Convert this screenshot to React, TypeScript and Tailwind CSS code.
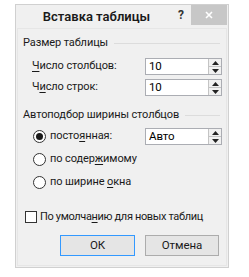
import React from 'react';

const font = { fontFamily: 'Roboto, "Noto Sans", sans-serif' };

function Acc({ children }: { children: React.ReactNode }) {
  return <span className="underline underline-offset-2">{children}</span>;
}

function Spin({ value }: { value: string }) {
  return (
    <div className="flex h-[17px] w-[77px] border border-[#abadb3] bg-white">
      <div className="flex flex-1 items-center pl-[3px] text-[11.5px] leading-none text-black">{value}</div>
      <div className="flex w-[13px] flex-col border-l border-[#c4c4c4] bg-[#f0f0f0]">
        <div className="flex flex-1 items-center justify-center border-b border-[#c4c4c4]">
          <svg width="7" height="4" viewBox="0 0 7 4">
            <path d="M0 4 L3.5 0 L7 4 Z" fill="#222" />
          </svg>
        </div>
        <div className="flex flex-1 items-center justify-center">
          <svg width="7" height="4" viewBox="0 0 7 4">
            <path d="M0 0 L3.5 4 L7 0 Z" fill="#222" />
          </svg>
        </div>
      </div>
    </div>
  );
}

function GroupHeading({ title }: { title: string }) {
  return (
    <div className="flex h-[16px] items-center gap-[6px]">
      <span className="whitespace-nowrap">{title}</span>
      <div className="mr-[2px] h-px flex-1 bg-[#dcdcdc]" />
    </div>
  );
}

function Radio({ checked }: { checked?: boolean }) {
  return (
    <div className="flex h-[13px] w-[13px] shrink-0 items-center justify-center rounded-full border border-[#333] bg-white">
      {checked && <div className="h-[7px] w-[7px] rounded-full bg-[#1a1a1a]" />}
    </div>
  );
}

export default function App() {
  return (
    <div className="min-h-screen bg-white pl-[15px] pt-[4px] text-[11px] tracking-[-0.1px] text-[#1a1a1a]" style={font}>
      <div className="flex h-[264px] w-[214px] flex-col border border-[#d0d0d0] bg-[#f0f0f0]">
        <div className="flex h-[23px] items-start">
          <div className="flex h-[23px] flex-1 items-center justify-center pl-[6px] text-[13px] font-semibold tracking-normal text-[#1a1a1a]">
            Вставка таблицы
          </div>
          <div className="flex h-[20px] w-[20px] items-center justify-center text-[12px] font-bold text-[#333]">?</div>
          <div className="mr-[1px] flex h-[20px] w-[36px] items-center justify-center bg-[#c7c7c7]">
            <svg width="8" height="8" viewBox="0 0 8 8">
              <path d="M1 1 L7 7 M7 1 L1 7" stroke="#fff" strokeWidth="1.6" />
            </svg>
          </div>
        </div>
        <div className="mx-[1px] mb-[1px] flex flex-1 flex-col border border-[#e6e6e6] pl-[5px] pr-[4px] pt-[6px]">
          <GroupHeading title="Размер таблицы" />
          <div className="mt-[7px] flex items-center justify-between pl-[9px]">
            <span><Acc>Ч</Acc>исло столбцов:</span>
            <Spin value="10" />
          </div>
          <div className="mt-[4px] flex items-center justify-between pl-[9px]">
            <span>Ч<Acc>и</Acc>сло строк:</span>
            <Spin value="10" />
          </div>
          <div className="mt-[11px]">
            <GroupHeading title="Автоподбор ширины столбцов" />
          </div>
          <div className="mt-[5px] flex items-center justify-between pl-[10px]">
            <div className="flex items-center gap-[4px]">
              <Radio checked />
              <span>посто<Acc>я</Acc>нная:</span>
            </div>
            <Spin value="Авто" />
          </div>
          <div className="mt-[6px] flex h-[17px] items-center gap-[4px] pl-[10px]">
            <Radio />
            <span>по содер<Acc>ж</Acc>имому</span>
          </div>
          <div className="mt-[6px] flex h-[17px] items-center gap-[4px] pl-[10px]">
            <Radio />
            <span>по ширине <Acc>о</Acc>кна</span>
          </div>
          <div className="mt-[18px] flex h-[16px] items-center gap-[3px] pl-[2px]">
            <div className="h-[12px] w-[12px] shrink-0 border border-[#333] bg-white" />
            <span className="whitespace-nowrap tracking-[-0.35px]">По умолча<Acc>н</Acc>ию для новых таблиц</span>
          </div>
          <div className="mt-[10px] flex justify-end gap-[10px] pr-[3px]">
            <button className="h-[21px] w-[75px] border border-[#3399ff] bg-[#e5e5e5] text-[11.5px] text-[#1a1a1a]">ОК</button>
            <button className="h-[21px] w-[74px] border border-[#acacac] bg-[#e5e5e5] text-[11.5px] text-[#1a1a1a]">Отмена</button>
          </div>
        </div>
      </div>
    </div>
  );
}
